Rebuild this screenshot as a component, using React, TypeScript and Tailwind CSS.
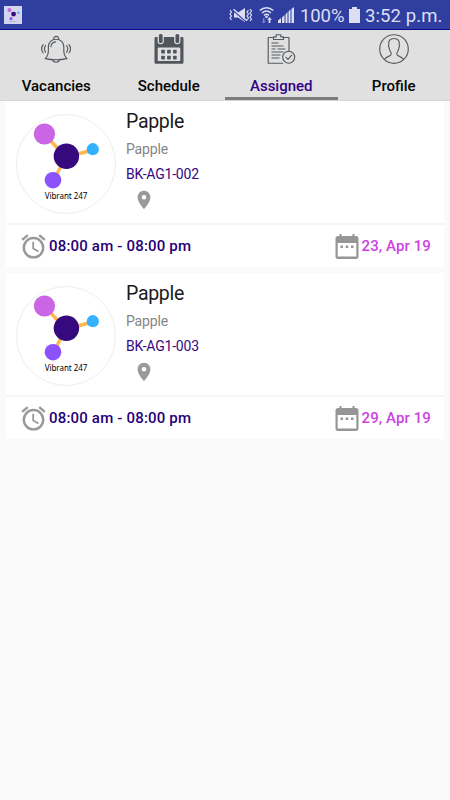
import React from "react";

const BellIcon = () => (
  <svg className="h-[30px] w-[30px]" viewBox="0 0 30 30" fill="none" stroke="#555b60" strokeWidth="1.150" strokeLinecap="round" strokeLinejoin="round">
    <path d="M4.200 24.600c2.600-2.500 3.200-4.800 3.200-8.200v-3.500c0-4.600 3.200-7.700 7.700-7.700s7.700 3.100 7.700 7.700v3.500c0 3.400.6 5.700 3.200 8.200-7 1.500-14.800 1.500-21.800 0z" />
    <path d="M12.700 5.300c-.6-4 5.600-4 5 0M11.500 25.700c.8 3.400 6.400 3.400 7.200 0" />
    <path d="M9.900 12.700c.3-2.700 2-4.500 4.700-4.800" />
    <path d="M4.600 11.500c-1.400 2-1.400 4.700 0 6.700M2.200 10.700c-2 2.600-2 5.700 0 8.300M25.600 11.500c1.400 2 1.400 4.700 0 6.700M28 10.700c2 2.600 2 5.700 0 8.300" />
  </svg>
);

const ScheduleIcon = () => (
  <svg className="h-[30px] w-[30px]" viewBox="0 0 30 30">
    <path fill="#50565b" fillRule="evenodd" d="M2 3h26c1 0 1.500.6 1.500 1.600v23.600c0 1-.6 1.600-1.600 1.600H2.100c-1 0-1.600-.6-1.600-1.600V4.600C.5 3.600 1 3 2 3zm1.700 11.500v11.700c0 .6.300.9.900.9h20.800c.6 0 .9-.3.900-.9V14.500c0-.6-.3-.9-.9-.9H4.600c-.6 0-.9.300-.9.900z" />
    <rect x="3.600" y="-1" width="6.200" height="11.300" rx="3" fill="#e0e0e0" />
    <rect x="20.200" y="-1" width="6.200" height="11.300" rx="3" fill="#e0e0e0" />
    <rect x="4.900" y="0" width="3.700" height="9" rx="1.500" fill="#50565b" />
    <rect x="21.500" y="0" width="3.700" height="9" rx="1.500" fill="#50565b" />
    {[7.200, 13.100, 19].map((x) => (
      <g key={x} fill="#50565b">
        <rect x={x} y="15.700" width="3.700" height="3.700" rx=".7" />
        <rect x={x} y="21.700" width="3.700" height="3.700" rx=".7" />
      </g>
    ))}
  </svg>
);

const ClipboardIcon = () => (
  <svg className="h-[30px] w-[30px]" viewBox="0 0 30 30" fill="none" stroke="#555b60" strokeWidth="1.150" strokeLinejoin="round">
    <path d="M7.500 3.500H2.200v25.700h15M17.500 3.500h5.500V17" />
    <path d="M7.500 5.500V2.800h2.700V.7h4.600v2.100h2.700v2.700z" />
    <path d="M5.500 9h7M5.500 12h12M5.500 15h4m2 0h8M5.500 18h12M5.500 21h9M5.500 24h8" />
    <circle cx="22.700" cy="23.200" r="6" fill="#e0e0e0" />
    <path d="m20 23.400 2 2 3.700-4.200" strokeLinecap="round" />
  </svg>
);

const ProfileIcon = () => (
  <svg className="h-[30px] w-[30px]" viewBox="0 0 30 30" fill="none" stroke="#555b60" strokeWidth="1.150">
    <circle cx="15" cy="15" r="14.300" />
    <path d="M5.300 25.500c1.200-2.500 4.600-3 6.300-4.200.8-.6.700-1.900.2-3-1-1.500-1.600-3-1.700-4.500-.6-1-.9-2.200-.3-3.100-.7-3.700 1.300-6.200 5.200-6.200s5.900 2.500 5.200 6.200c.6.900.3 2.100-.3 3.100-.1 1.500-.7 3-1.700 4.500-.5 1.100-.6 2.400.2 3 1.700 1.200 5.100 1.700 6.300 4.200" />
  </svg>
);

const Molecule = ({ className }: { className: string }) => (
  <svg className={className} viewBox="0 0 100 78">
    <path d="M28 20 50 43 77 36M50 43 37 67" fill="none" stroke="#ffb84f" strokeWidth="3.500" />
    <circle cx="28.500" cy="20" r="10.600" fill="#ca65e3" />
    <circle cx="50.400" cy="42.200" r="12.700" fill="#360a7e" />
    <circle cx="76.800" cy="35.200" r="6.100" fill="#35b2fd" />
    <circle cx="37" cy="66.200" r="8.300" fill="#8c52fc" />
  </svg>
);

const StatusBar = () => (
  <header className="flex h-[30px] items-center border-b border-[#0a0a8c] bg-[#303f9f] pt-px pl-1 text-[#dcdff3]">
    <div className="flex h-[18px] w-[18px] flex-col items-center bg-[#d3d5ef]">
      <Molecule className="h-[15px] w-[19px]" />
      <span className="h-px w-2 bg-[#b7b8ce]" />
    </div>
    <svg className="ml-[206px] h-[18px] w-[25px]" viewBox="0 0 25 18" fill="none" stroke="currentColor" strokeWidth="1.200">
      <path fill="currentColor" stroke="none" d="M6 6.500h4l7-4.500v14l-7-4.500H6z" />
      <path d="M5.500 4.800 18 15.500" stroke="#303f9f" strokeWidth="1.500" />
      <path d="M5.500 3.200 19 14.800" strokeWidth="1.500" />
      <path d="m2 4 1.500 2L2 8l1.500 2L2 12l1.500 2M20.500 4 19 6l1.500 2L19 10l1.500 2L19 14M22 3l1.500 2L22 7l1.500 2L22 11l1.500 2L22 15" />
    </svg>
    <svg className="ml-[6px] h-[18px] w-[15px]" viewBox="0 0 15 18" fill="none" stroke="currentColor" strokeWidth="1.500">
      <path d="M.8 4.500c4-3.700 9.400-3.700 13.400 0M3 7c3-2.700 6-2.700 9 0M5 9.300c1.700-1.400 3.300-1.400 5 0" />
      <circle cx="7.500" cy="10.800" r="1.300" fill="currentColor" stroke="none" />
      <path fill="currentColor" stroke="none" d="m10.500 11 2.300 2.700h-1.400V17H9.600v-3.300H8.200z" />
      <path fill="currentColor" stroke="none" opacity=".45" d="M4 12h1.400v3h1.300l-2 2.500-2-2.500H4z" />
    </svg>
    <svg className="ml-1 h-[17px] w-4" viewBox="0 0 16 17" fill="currentColor">
      <path d="M0 13.500 3 11v5H0zM4 10.500 6.500 8v8H4zM7.500 7.500 9.500 5v11h-2zM10.500 4.500l2-2V16h-2zM13.500 2 16 0v16h-2.500z" />
    </svg>
    <span className="ml-[6px] w-[46px] pt-0.5 text-[18.500px] leading-6 tracking-[-0.1px] whitespace-nowrap">100%</span>
    <svg className="ml-[3px] h-4 w-[11px]" viewBox="0 0 11 16" fill="currentColor">
      <path d="M3 0h5v2h3v14H0V2h3z" />
    </svg>
    <span className="ml-[5px] pt-0.5 text-[18.500px] leading-6 tracking-[0.1px] whitespace-nowrap">3:52 p.m.</span>
  </header>
);

const tabs = [
  { label: "Vacancies", Icon: BellIcon },
  { label: "Schedule", Icon: ScheduleIcon },
  { label: "Assigned", Icon: ClipboardIcon, active: true },
  { label: "Profile", Icon: ProfileIcon },
];

const Tabs = () => (
  <nav className="grid h-[71px] grid-cols-4 border-b border-[#d6d6d6] bg-[#e0e0e0]">
    {tabs.map(({ label, Icon, active }) => (
      <button
        key={label}
        className={`flex flex-col items-center border-b-[3px] pt-1 text-[15px] font-medium ${active ? "border-[#7b7b7b] text-[#330087]" : "border-transparent text-[#050505]"}`}
      >
        <Icon />
        <span className="mt-3 leading-5">{label}</span>
      </button>
    ))}
  </nav>
);

const Card = ({ code, date }: { code: string; date: string }) => (
  <article className="h-[166px] rounded-[2px] bg-white">
    <div className="flex h-[124px] border-b-2 border-[#f5f5f5]">
      <div className="mt-[13px] ml-[10px] flex h-[100px] w-[100px] flex-col items-center rounded-full border border-[#eeeeee]">
        <Molecule className="-mt-px h-[78px] w-[100px] shrink-0" />
        <span className="font-['Noto_Sans',sans-serif] text-[8px] leading-[8px] tracking-[-0.05px] text-black">Vibrant 247</span>
      </div>
      <div className="ml-[10px] flex flex-col items-start">
        <h2 className="mt-[9px] text-[19.500px] leading-6 tracking-[-0.3px] text-[#1b1b1b]">Papple</h2>
        <p className="mt-[5px] text-[14px] leading-5 tracking-[-0.15px] text-[#858585]">Papple</p>
        <p className="mt-[5px] text-[14px] leading-5 tracking-[-0.2px] text-[#37087f]">{code}</p>
        <svg className="mt-[5px] ml-[7px] h-[22px] w-[22px]" viewBox="0 0 24 24" fill="#9a9a9a">
          <path d="M12 2C8.130 2 5 5.130 5 9c0 5.250 7 13 7 13s7-7.750 7-13c0-3.870-3.130-7-7-7zm0 9.500A2.500 2.500 0 1 1 12 6.500a2.500 2.500 0 0 1 0 5z" />
        </svg>
      </div>
    </div>
    <footer className="flex h-[42px] items-center pr-[13px] pl-[13px] text-[15px] font-medium">
      <svg className="h-[29px] w-[29px]" viewBox="0 0 24 24" fill="#999">
        <path d="m22 5.720-4.600-3.860-1.290 1.530 4.600 3.860zM7.880 3.390 6.600 1.860 2 5.710l1.290 1.530zM12.500 8H11v6l4.750 2.850.75-1.230-4-2.370zM12 4a9 9 0 1 0 0 18 9 9 0 0 0 0-18zm0 16a7 7 0 1 1 0-14 7 7 0 0 1 0 14z" />
      </svg>
      <span className="ml-px tracking-[0.180px] text-[#270078]">08:00 am - 08:00 pm</span>
      <svg className="mr-[3px] ml-auto h-[26px] w-6" viewBox="0 0 24 26">
        <path fill="#969696" fillRule="evenodd" d="M3 3h1.500V1h2v2h11V1h2v2H21c1.600 0 2.500 1 2.500 2.500v18c0 1.500-.9 2.500-2.500 2.500H3c-1.600 0-2.500-1-2.500-2.500v-18C.5 4 1.400 3 3 3zm-.3 7v13.500h18.600V10z" />
        <path fill="#969696" d="M5.500 12.500H8V15H5.500zM10.700 12.500h2.500V15h-2.500zM16 12.500h2.500V15H16z" />
      </svg>
      <span className="tracking-[0.1px] text-[#cc43df]">{date}</span>
    </footer>
  </article>
);

export default function App() {
  return (
    <div className="min-h-screen w-full bg-[#fafafa] font-['Roboto',sans-serif]">
      <StatusBar />
      <Tabs />
      <main className="flex flex-col gap-[6px] px-[6px]">
        <Card code="BK-AG1-002" date="23, Apr 19" />
        <Card code="BK-AG1-003" date="29, Apr 19" />
      </main>
    </div>
  );
}
